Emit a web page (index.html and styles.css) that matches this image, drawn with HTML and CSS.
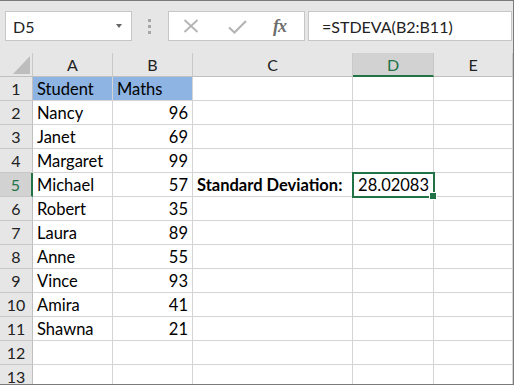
FILE: index.html
```html
<!DOCTYPE html>
<html>
<head>
<meta charset="utf-8">
<link rel="stylesheet" href="styles.css">
</head>
<body>
<div class="app">
  <div class="toolbar">
    <div class="namebox">
      <span class="name">D5</span>
      <span class="caret"></span>
    </div>
    <div class="grip"><i></i><i></i><i></i></div>
    <div class="actions">
      <svg class="ic-x" width="16" height="14" viewBox="0 0 16 14"><path d="M1.5 1 L14.5 13 M14.5 1 L1.5 13" stroke="#b4b4b4" stroke-width="1.8" fill="none"/></svg>
      <svg class="ic-check" width="19" height="14" viewBox="0 0 19 14"><path d="M1 7.5 L6.5 12.5 L18 1" stroke="#b4b4b4" stroke-width="2.2" fill="none"/></svg>
      <span class="fx">fx</span>
    </div>
    <div class="formula">=STDEVA(B2:B11)</div>
  </div>
  <div class="sheet">
    <div class="corner"><svg width="17" height="18" viewBox="0 0 17 18"><path d="M17 0 L17 18 L0 18 Z" fill="#bdbdbd"/></svg></div>
    <div class="ch">A</div>
    <div class="ch">B</div>
    <div class="ch">C</div>
    <div class="ch active">D</div>
    <div class="ch">E</div>

    <div class="rh">1</div><div class="c fill">Student</div><div class="c fill">Maths</div><div class="c"></div><div class="c"></div><div class="c"></div>
    <div class="rh">2</div><div class="c">Nancy</div><div class="c num">96</div><div class="c"></div><div class="c"></div><div class="c"></div>
    <div class="rh">3</div><div class="c">Janet</div><div class="c num">69</div><div class="c"></div><div class="c"></div><div class="c"></div>
    <div class="rh">4</div><div class="c">Margaret</div><div class="c num">99</div><div class="c"></div><div class="c"></div><div class="c"></div>
    <div class="rh active">5</div><div class="c">Michael</div><div class="c num">57</div><div class="c bold">Standard Deviation:</div><div class="c num sel">28.02083</div><div class="c"></div>
    <div class="rh">6</div><div class="c">Robert</div><div class="c num">35</div><div class="c"></div><div class="c"></div><div class="c"></div>
    <div class="rh">7</div><div class="c">Laura</div><div class="c num">89</div><div class="c"></div><div class="c"></div><div class="c"></div>
    <div class="rh">8</div><div class="c">Anne</div><div class="c num">55</div><div class="c"></div><div class="c"></div><div class="c"></div>
    <div class="rh">9</div><div class="c">Vince</div><div class="c num">93</div><div class="c"></div><div class="c"></div><div class="c"></div>
    <div class="rh">10</div><div class="c">Amira</div><div class="c num">41</div><div class="c"></div><div class="c"></div><div class="c"></div>
    <div class="rh">11</div><div class="c">Shawna</div><div class="c num">21</div><div class="c"></div><div class="c"></div><div class="c"></div>
    <div class="rh">12</div><div class="c"></div><div class="c"></div><div class="c"></div><div class="c"></div><div class="c"></div>
    <div class="rh">13</div><div class="c"></div><div class="c"></div><div class="c"></div><div class="c"></div><div class="c"></div>
  </div>
</div>
</body>
</html>
```

FILE: styles.css
```css
* { box-sizing: border-box; }
html, body { margin: 0; padding: 0; background: #fff; }
body { font-family: Lato, "Noto Sans", sans-serif; font-size: 16px; color: #000; }

.app {
  width: 514px;
  height: 385px;
  border: 1px solid #7a7a7a;
  border-left: none;
  overflow: hidden;
  background: #fff;
}

.toolbar {
  height: 52px;
  background: #e6e6e6;
  display: flex;
  align-items: flex-start;
  padding-top: 10px;
}

.namebox {
  margin-left: 5px;
  width: 127px;
  height: 30px;
  background: #fff;
  border: 1px solid #c6c6c6;
  display: flex;
  align-items: center;
  justify-content: space-between;
  padding: 0 9px 0 7px;
}
.name { font-size: 16px; color: #222; }
.caret {
  width: 0; height: 0;
  border-left: 3.5px solid transparent;
  border-right: 3.5px solid transparent;
  border-top: 4px solid #666;
}

.grip {
  margin-left: 16px;
  width: 3px;
  height: 30px;
  display: flex;
  flex-direction: column;
  justify-content: center;
  gap: 3px;
}
.grip i { display: block; width: 3px; height: 3px; background: #a6a6a6; }

.actions {
  margin-left: 17px;
  width: 137px;
  height: 30px;
  background: #fff;
  border: 1px solid #c6c6c6;
  display: flex;
  align-items: center;
}
.ic-x { margin-left: 14px; }
.ic-check { margin-left: 29px; margin-top: 1px; }
.fx {
  margin-left: 26px;
  font-family: "Liberation Serif", serif;
  font-style: italic;
  font-weight: bold;
  font-size: 18px;
  color: #6e6e6e;
  letter-spacing: -1px;
}

.formula {
  margin-left: 3px;
  flex: 1;
  margin-right: 1px;
  height: 30px;
  background: #fff;
  border: 1px solid #c6c6c6;
  display: flex;
  align-items: center;
  padding-left: 13px;
  font-size: 16px;
  color: #222;
}

.sheet {
  display: grid;
  grid-template-columns: 33px 80px 80px 160px 81px 79px;
  grid-auto-rows: 24px;
}

.corner {
  background: #e6e6e6;
  border-right: 1px solid #c8c8c8;
  border-bottom: 1px solid #c0c0c0;
  display: flex;
  align-items: flex-end;
  justify-content: flex-end;
  padding: 0 2px 2px 0;
}

.ch {
  background: #e6e6e6;
  border-right: 1px solid #c8c8c8;
  border-bottom: 1px solid #c0c0c0;
  display: flex;
  align-items: flex-end;
  justify-content: center;
  padding-bottom: 2px;
  color: #222;
}
.ch.active {
  background: #d2d2d2;
  color: #217346;
  border-bottom: 2px solid #217346;
  padding-bottom: 1px;
}

.rh {
  background: #e6e6e6;
  border-right: 1px solid #c0c0c0;
  border-bottom: 1px solid #c8c8c8;
  display: flex;
  align-items: flex-end;
  justify-content: center;
  padding-bottom: 2px;
  color: #222;
}
.rh.active {
  background: #d2d2d2;
  color: #217346;
  border-right: 2px solid #217346;
}

.c {
  border-right: 1px solid #d4d4d4;
  border-bottom: 1px solid #d4d4d4;
  display: flex;
  align-items: flex-end;
  padding: 0 4px 1px 4px;
  white-space: nowrap;
  overflow: visible;
  font-size: 16.5px;
}
.c.fill { background: #8db4e2; }
.c.num { justify-content: flex-end; }
.c.bold { font-weight: bold; }
.c.sel {
  position: relative;
  outline: 2px solid #217346;
  outline-offset: -1px;
}
.c.sel::after {
  content: "";
  position: absolute;
  right: -4px;
  bottom: -4px;
  width: 6px;
  height: 6px;
  background: #217346;
  border: 1px solid #fff;
}
```
